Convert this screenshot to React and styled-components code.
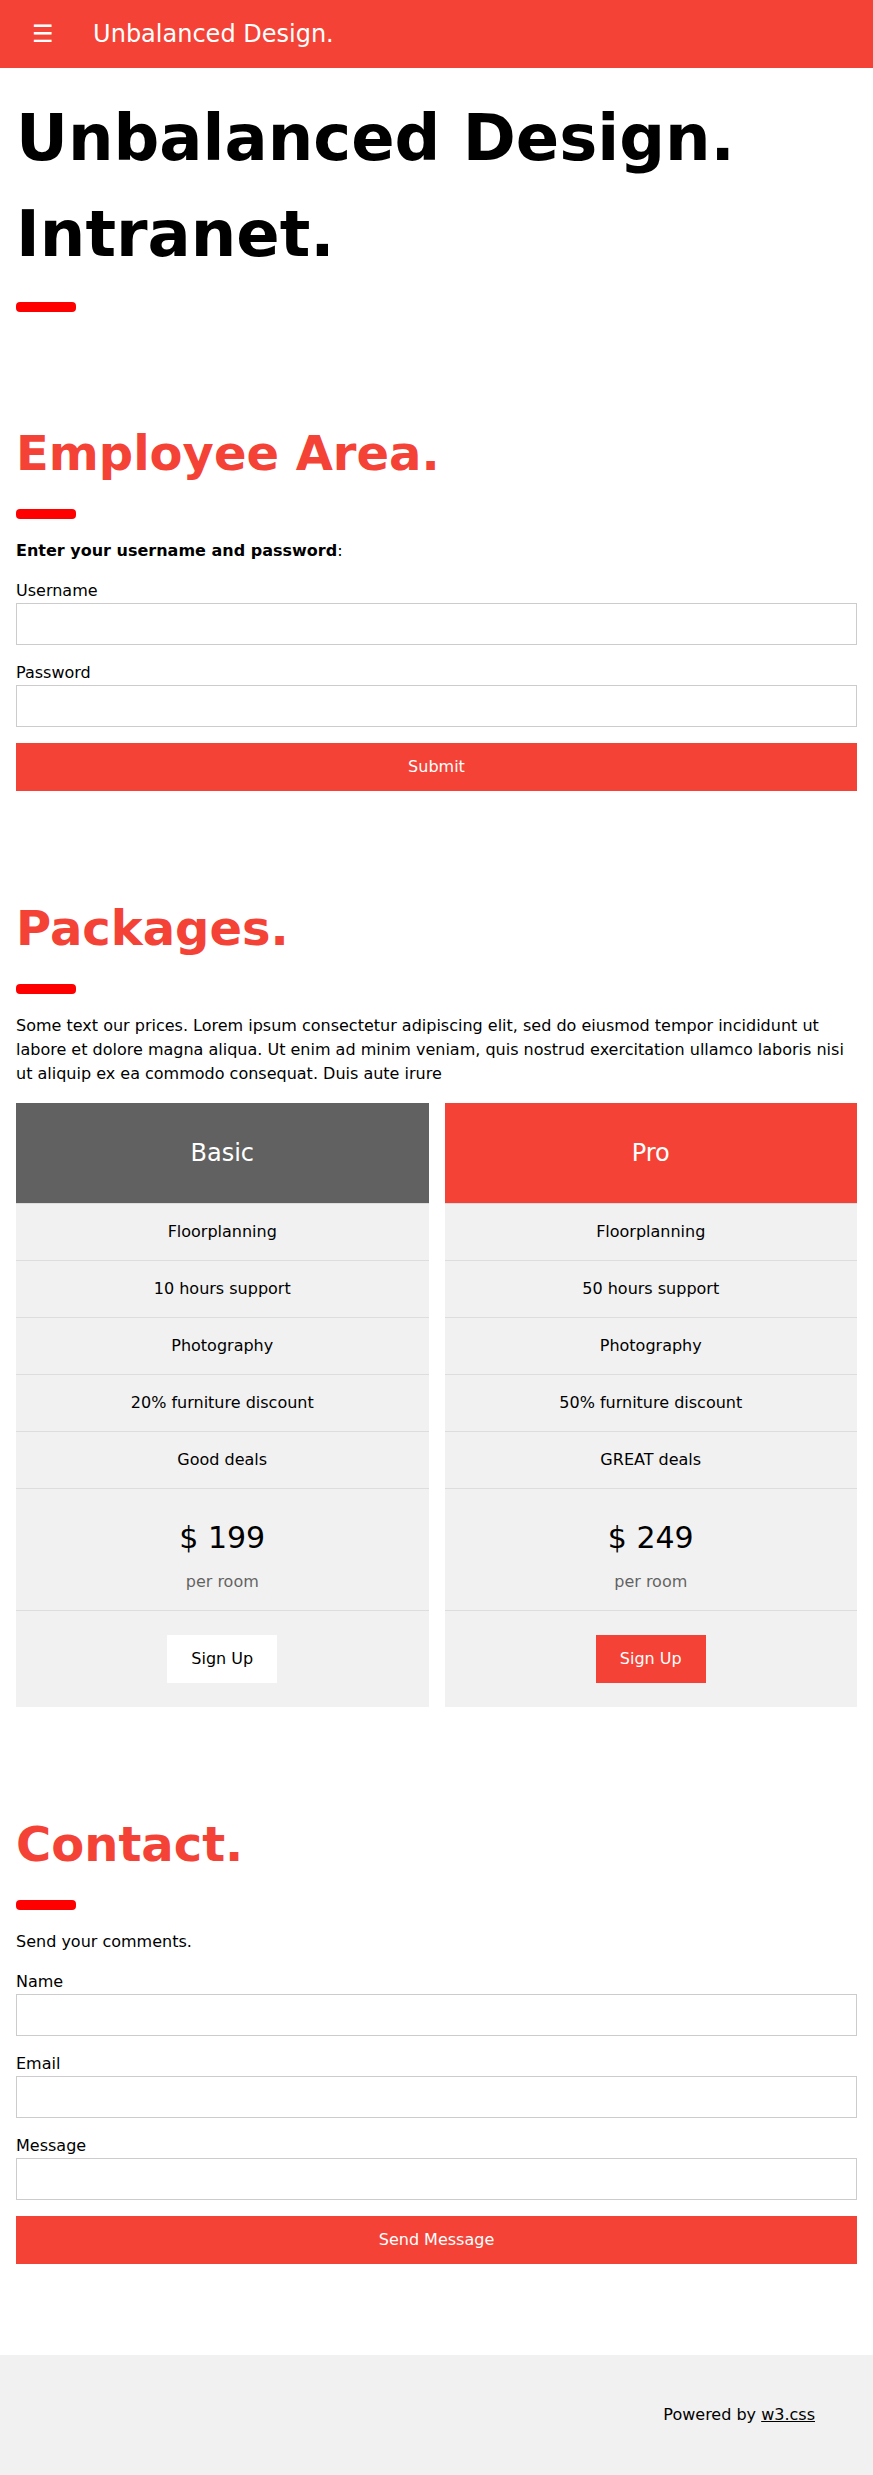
import React from "react";
import styled, { createGlobalStyle } from "styled-components";

const RED = "#f44336";

const GlobalStyle = createGlobalStyle`
  html, body {
    margin: 0;
    padding: 0;
    background: #fff;
  }
  body {
    font-family: "DejaVu Sans", Verdana, sans-serif;
    font-size: 16px;
    line-height: 1.5;
    color: #000;
  }
  *, *::before, *::after { box-sizing: border-box; }
`;

const TopBar = styled.header`
  display: flex;
  align-items: center;
  height: 68px;
  padding: 8px 16px;
  background: ${RED};
  color: #fff;
  font-size: 24px;
  line-height: 36px;
`;

const MenuButton = styled.button`
  border: none;
  background: ${RED};
  color: #fff;
  font: inherit;
  line-height: 36px;
  padding: 8px 16px;
  margin: 0 23.6px 0 0;
  cursor: pointer;
`;

const Brand = styled.span`
  white-space: nowrap;
`;

const Section = styled.section`
  display: flow-root;
  padding: 0 16px;
  margin-top: ${(p) => p.$top}px;
`;

const HeroTitle = styled.h1`
  margin: 10px 0;
  font-size: 64px;
  line-height: 96px;
  font-weight: 700;
`;

const SectionTitle = styled.h1`
  margin: 10px 0;
  font-size: 48px;
  line-height: 72px;
  font-weight: 700;
  color: ${RED};
`;

const Divider = styled.hr`
  box-sizing: content-box;
  width: 50px;
  height: 0;
  margin: 20px 0;
  border: 5px solid red;
  border-radius: 4px;
`;

const Text = styled.p`
  margin: 16px 0;
`;

const Field = styled.div`
  margin: 16px 0;
`;

const Label = styled.label`
  display: block;
  line-height: 24px;
`;

const Input = styled.input`
  display: block;
  width: 100%;
  height: 42px;
  margin: 0;
  padding: 8px;
  border: 1px solid #ccc;
  font: inherit;
  line-height: 24px;
  background: #fff;
  outline: none;
`;

const BlockButton = styled.button`
  display: block;
  width: 100%;
  margin: 0 0 16px;
  padding: 12px 24px;
  border: none;
  background: ${RED};
  color: #fff;
  font: inherit;
  line-height: 24px;
  text-align: center;
  cursor: pointer;
`;

const PriceRow = styled.div`
  display: grid;
  grid-template-columns: 1fr 1fr;
  gap: 16px;
  margin-top: 1px;
  padding: 0 16px 16px;
  align-items: start;
`;

const PriceCard = styled.ul`
  list-style: none;
  margin: 0;
  padding: 0;
  background: #f1f1f1;
  text-align: center;
`;

const CardHead = styled.li`
  padding: 32px 16px;
  font-size: 24px;
  line-height: 36px;
  color: #fff;
  background: ${(p) => p.$bg};
  border-bottom: 1px solid #ddd;
`;

const Feature = styled.li`
  padding: 16px;
  border-bottom: 1px solid #ddd;
`;

const PriceItem = styled.li`
  padding: 16px;
  border-bottom: 1px solid #ddd;
`;

const Price = styled.h2`
  margin: 10px 0;
  font-size: 30px;
  line-height: 45px;
  font-weight: 400;
`;

const PerRoom = styled.span`
  opacity: 0.6;
`;

const ActionItem = styled.li`
  padding: 24px 16px;
`;

const SignUp = styled.button`
  margin: 0;
  padding: 12px 24px;
  border: none;
  background: ${(p) => (p.$primary ? RED : "#fff")};
  color: ${(p) => (p.$primary ? "#fff" : "#000")};
  font: inherit;
  line-height: 24px;
  cursor: pointer;
`;

const Footer = styled.footer`
  display: flow-root;
  margin-top: 75px;
  padding: 32px 58px 32px 16px;
  background: #f1f1f1;
  text-align: right;
`;

const FooterLink = styled.a`
  color: inherit;
  text-decoration: underline;
`;

const plans = [
  {
    name: "Basic",
    bg: "#616161",
    features: ["Floorplanning", "10 hours support", "Photography", "20% furniture discount", "Good deals"],
    price: "$ 199",
    primary: false,
  },
  {
    name: "Pro",
    bg: RED,
    features: ["Floorplanning", "50 hours support", "Photography", "50% furniture discount", "GREAT deals"],
    price: "$ 249",
    primary: true,
  },
];

export default function App() {
  return (
    <>
      <GlobalStyle />
      <TopBar>
        <MenuButton type="button">☰</MenuButton>
        <Brand>Unbalanced Design.</Brand>
      </TopBar>

      <Section $top={12}>
        <HeroTitle>Unbalanced Design. Intranet.</HeroTitle>
        <Divider />
      </Section>

      <Section $top={75}>
        <SectionTitle>Employee Area.</SectionTitle>
        <Divider />
        <Text>
          <b>Enter your username and password</b>:
        </Text>
        <form onSubmit={(e) => e.preventDefault()}>
          <Field>
            <Label>Username</Label>
            <Input type="text" />
          </Field>
          <Field>
            <Label>Password</Label>
            <Input type="password" />
          </Field>
          <BlockButton type="submit">Submit</BlockButton>
        </form>
      </Section>

      <Section $top={75}>
        <SectionTitle>Packages.</SectionTitle>
        <Divider />
        <Text>
          Some text our prices. Lorem ipsum consectetur adipiscing elit, sed do eiusmod tempor incididunt ut labore et
          dolore magna aliqua. Ut enim ad minim veniam, quis nostrud exercitation ullamco laboris nisi ut aliquip ex ea
          commodo consequat. Duis aute irure
        </Text>
      </Section>

      <PriceRow>
        {plans.map((plan) => (
          <PriceCard key={plan.name}>
            <CardHead $bg={plan.bg}>{plan.name}</CardHead>
            {plan.features.map((f) => (
              <Feature key={f}>{f}</Feature>
            ))}
            <PriceItem>
              <Price>{plan.price}</Price>
              <PerRoom>per room</PerRoom>
            </PriceItem>
            <ActionItem>
              <SignUp type="button" $primary={plan.primary}>
                Sign Up
              </SignUp>
            </ActionItem>
          </PriceCard>
        ))}
      </PriceRow>

      <Section $top={75}>
        <SectionTitle>Contact.</SectionTitle>
        <Divider />
        <Text>Send your comments.</Text>
        <form onSubmit={(e) => e.preventDefault()}>
          <Field>
            <Label>Name</Label>
            <Input type="text" />
          </Field>
          <Field>
            <Label>Email</Label>
            <Input type="text" />
          </Field>
          <Field>
            <Label>Message</Label>
            <Input type="text" />
          </Field>
          <BlockButton type="submit">Send Message</BlockButton>
        </form>
      </Section>

      <Footer>
        <Text>
          Powered by <FooterLink href="#">w3.css</FooterLink>
        </Text>
      </Footer>
    </>
  );
}
